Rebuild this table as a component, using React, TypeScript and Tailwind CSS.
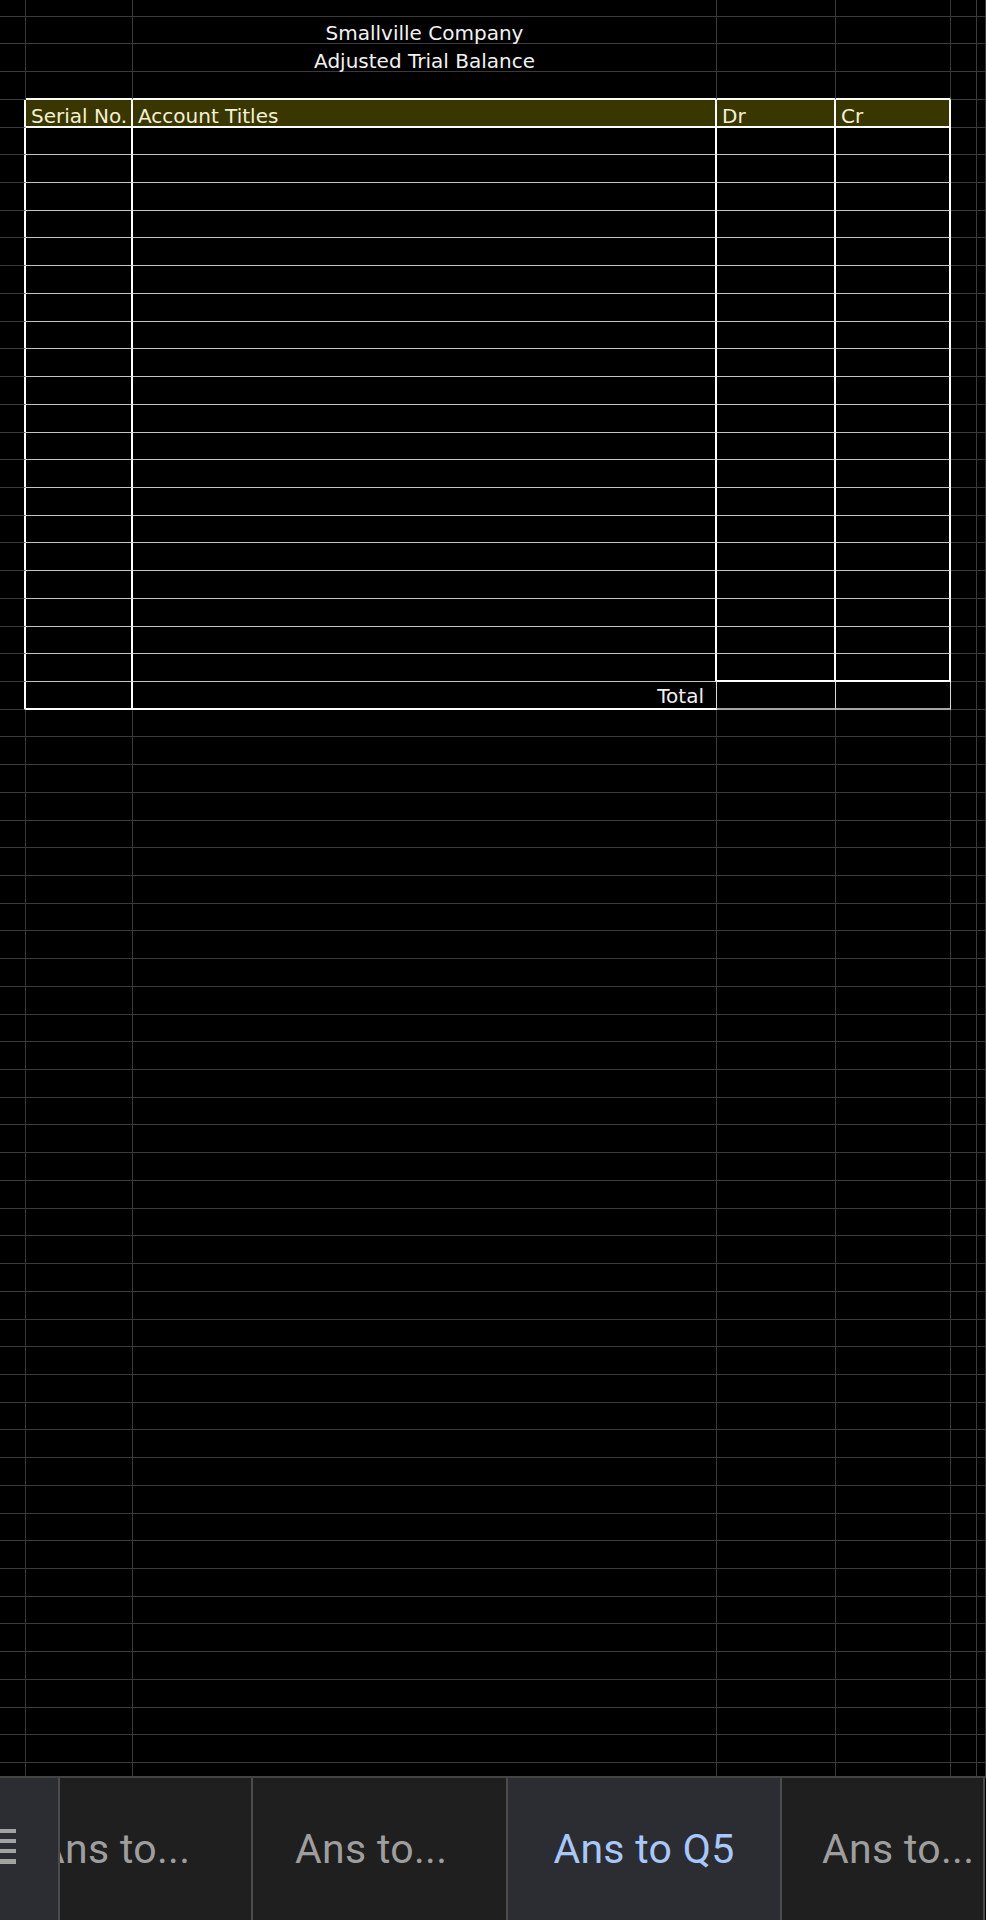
import React from "react";

const COLS = 7;
const ROWS = 65;

function rightCls(r: number, c: number): string {
  if (c === 0 && r >= 4 && r <= 25) return "border-r-2 border-r-white";
  if (c >= 1 && c <= 4 && r >= 4 && r <= 24) return "border-r-2 border-r-white";
  if (r === 25 && c === 1) return "border-r-2 border-r-white";
  if (r === 25 && c >= 2 && c <= 4) return "border-r border-r-[#d9d9d9]";
  return "border-r border-r-[#3a3a3a]";
}

function bottomCls(r: number, c: number): string {
  const inTable = c >= 1 && c <= 4;
  if (inTable && (r === 3 || r === 4)) return "border-b-2 border-b-white";
  if (inTable && r >= 5 && r <= 24) {
    if (r === 24 && c >= 3) return "border-b-2 border-b-white";
    return "border-b border-b-[#c4c4c4]";
  }
  if (r === 25 && (c === 1 || c === 2)) return "border-b-2 border-b-white";
  if (r === 25 && (c === 3 || c === 4)) return "border-b-2 border-b-[#a6a6a6]";
  return "border-b border-b-[#3a3a3a]";
}

type CellText = { text: string; align: "left" | "center" | "right"; header?: boolean };

function cellText(r: number, c: number): CellText | null {
  if (r === 1 && c === 2) return { text: "Smallville Company", align: "center" };
  if (r === 2 && c === 2) return { text: "Adjusted Trial Balance", align: "center" };
  if (r === 4 && c === 1) return { text: "Serial No.", align: "left", header: true };
  if (r === 4 && c === 2) return { text: "Account Titles", align: "left", header: true };
  if (r === 4 && c === 3) return { text: "Dr", align: "left", header: true };
  if (r === 4 && c === 4) return { text: "Cr", align: "left", header: true };
  if (r === 25 && c === 2) return { text: "Total", align: "right" };
  return null;
}

function Cell({ r, c }: { r: number; c: number }) {
  const t = cellText(r, c);
  const bg = r === 4 && c >= 1 && c <= 4 ? "bg-[#3a3600]" : "";
  let alignCls = "justify-start pl-[5px]";
  if (t && t.align === "center") alignCls = "justify-center";
  if (t && t.align === "right") alignCls = "justify-end pr-[12px] pb-[1.5px]";
  const color = t && t.header ? "text-[#f4f0d2]" : "text-[#f2f2f2]";
  return (
    <div
      className={`flex min-w-0 items-end whitespace-nowrap ${rightCls(r, c)} ${bottomCls(r, c)} ${bg} ${alignCls}`}
    >
      {t ? (
        <span className={`text-[20px] leading-none ${color}`}>{t.text}</span>
      ) : null}
    </div>
  );
}

function Sheet() {
  const cells: React.ReactNode[] = [];
  for (let r = 0; r < ROWS; r++) {
    for (let c = 0; c < COLS; c++) {
      cells.push(<Cell key={`${r}-${c}`} r={r} c={c} />);
    }
  }
  return (
    <div className="h-[1776px] overflow-hidden bg-black font-['DejaVu_Sans',Verdana,sans-serif]">
      <div className="mt-[-11px] grid grid-cols-[26px_107px_584px_119px_115px_26px_1fr] auto-rows-[27.73px]">
        {cells}
      </div>
    </div>
  );
}

function MenuIcon() {
  return (
    <svg width="16" height="35" viewBox="0 0 16 35" aria-hidden="true">
      <rect x="0" y="0" width="16" height="4" fill="#a3a3a3" />
      <rect x="0" y="10" width="16" height="4" fill="#a3a3a3" />
      <rect x="0" y="20" width="16" height="4" fill="#a3a3a3" />
      <rect x="0" y="30" width="16" height="5" fill="#a3a3a3" />
    </svg>
  );
}

function TabBar() {
  return (
    <div className="flex h-[144px] border-t-2 border-t-[#444444] bg-[#1f1f1f] font-['Roboto',sans-serif]">
      <div className="flex w-[60px] shrink-0 items-start border-r-2 border-r-[#4b4b4b] bg-[#2c2d32] pt-[51px]">
        <MenuIcon />
      </div>
      <div className="w-[925px] shrink-0 overflow-hidden border-r-2 border-r-[#4b4b4b]">
        <div className="ml-[-64px] flex h-full">
          <div className="flex w-[257px] shrink-0 items-center border-r-2 border-r-[#4b4b4b] pl-[42px] text-[41px] leading-none tracking-[0.3px] text-[#9e9e9e]">
            Ans to...
          </div>
          <div className="flex w-[255px] shrink-0 items-center border-r-2 border-r-[#4b4b4b] pl-[42px] text-[41px] leading-none tracking-[0.3px] text-[#9e9e9e]">
            Ans to...
          </div>
          <div className="flex w-[274px] shrink-0 items-center justify-center border-r-2 border-r-[#4b4b4b] bg-[#2c2d32] text-[41px] leading-none tracking-[0.3px] text-[#a8c7fa]">
            Ans to Q5
          </div>
          <div className="flex w-[260px] shrink-0 items-center pl-[40px] text-[41px] leading-none tracking-[0.3px] text-[#9e9e9e]">
            Ans to...
          </div>
        </div>
      </div>
      <div className="flex-1 bg-black" />
    </div>
  );
}

export default function App() {
  return (
    <div className="w-[986px] h-[1920px] overflow-hidden bg-black">
      <Sheet />
      <TabBar />
    </div>
  );
}
